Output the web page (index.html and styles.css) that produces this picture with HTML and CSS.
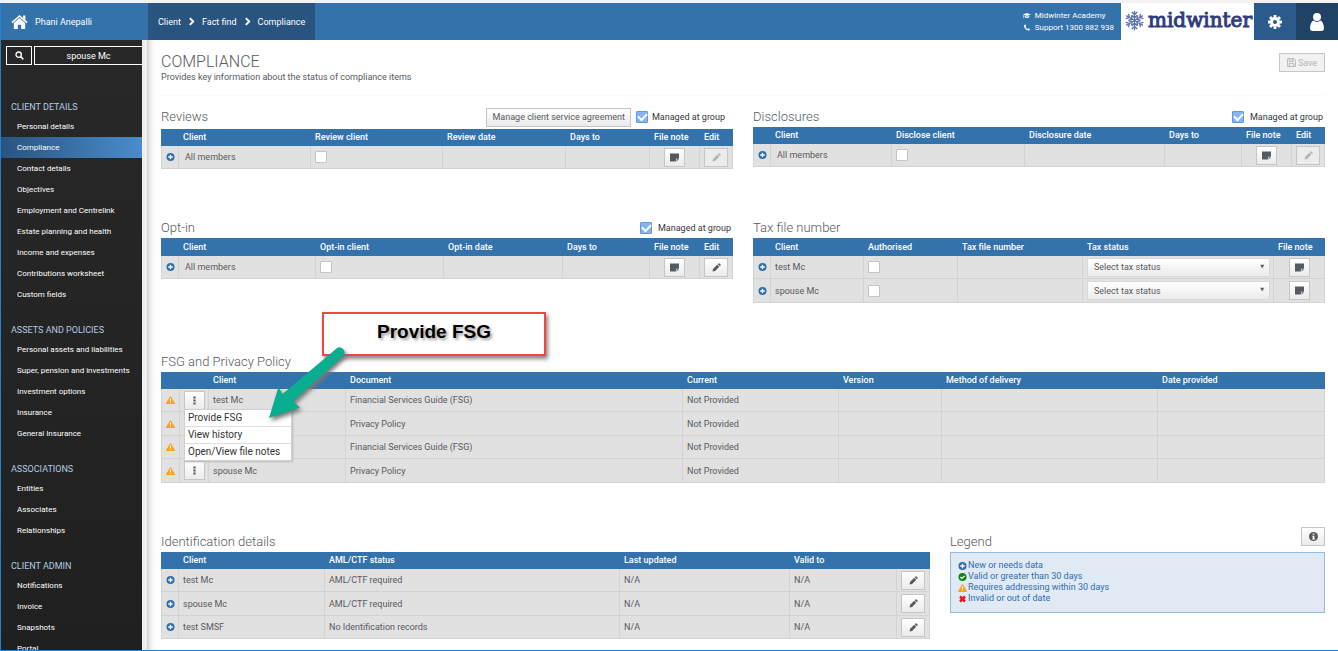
FILE: index.html
```html
<!DOCTYPE html>
<html lang="en">
<head>
<meta charset="utf-8">
<title>Compliance</title>
<link rel="stylesheet" href="styles.css">
</head>
<body>
<svg class="sprite" aria-hidden="true">
  <symbol id="i-plus" viewBox="0 0 16 16"><circle cx="8" cy="8" r="8" fill="#2f6cab"/><path d="M8 3.5v9M3.5 8h9" stroke="#fff" stroke-width="2.6"/></symbol>
  <symbol id="i-ok" viewBox="0 0 16 16"><circle cx="8" cy="8" r="8" fill="#0a8a12"/><path d="M3.8 8l3 3 5.4-5.4" fill="none" stroke="#fff" stroke-width="2.4"/></symbol>
  <symbol id="i-warn" viewBox="0 0 18 16"><path d="M9 0.5a1.2 1.2 0 0 1 1 .6l7.7 13a1.2 1.2 0 0 1-1 1.8H1.300a1.200 1.200 0 0 1-1-1.800l7.700-13a1.200 1.200 0 0 1 1-.6z" fill="#ffa01e"/><path d="M9 5v5M9 11.500v2.200" stroke="#fff" stroke-width="2.200"/></symbol>
  <symbol id="i-cross" viewBox="0 0 16 16"><path d="M3 3l10 10M13 3L3 13" stroke="#f01414" stroke-width="5"/></symbol>
  <symbol id="i-note" viewBox="0 0 16 16"><path d="M0 1h16v9h-5.500v5H0z" fill="currentColor"/><path d="M11.800 11.200H16l-4.200 3.800z" fill="currentColor"/></symbol>
  <symbol id="i-pencil" viewBox="0 0 16 16"><path d="M1 15l.8-4.500 7.400-7.400 3.700 3.700-7.400 7.400zM10.200 2.100l1.400-1.400q.8-.6 1.600 0l2.100 2.100q.6.8 0 1.600l-1.400 1.400z" fill="currentColor"/></symbol>
  <symbol id="i-dots" viewBox="0 0 16 16"><path d="M6 1h4v3.600H6zM6 6.200h4v3.600H6zM6 11.400h4V15H6z" fill="currentColor"/></symbol>
  <symbol id="i-info" viewBox="0 0 16 16"><circle cx="8" cy="8" r="8" fill="currentColor"/><path d="M6.700 2.500h2.800v2.500H6.700zM5.600 6.500h3.900v5h1.200v1.700H5.600v-1.700h1.100V8.200H5.600z" fill="#fff"/></symbol>
  <symbol id="i-home" viewBox="0 0 18 16"><path d="M9 3.800l6 5.200v6.500h-4.200V11H7.200v4.500H3V9z" fill="currentColor"/><path d="M1 8.600L9 1.600l8 7" fill="none" stroke="currentColor" stroke-width="1.700"/><path d="M12.800 1h2.400v5l-2.400-2z" fill="currentColor"/></symbol>
  <symbol id="i-search" viewBox="0 0 16 16"><circle cx="6.500" cy="6.500" r="4.700" fill="none" stroke="currentColor" stroke-width="2.400"/><path d="M10 10l4.800 4.800" stroke="currentColor" stroke-width="2.800"/></symbol>
  <symbol id="i-chev" viewBox="0 0 16 16"><path d="M5 2l6 6-6 6" fill="none" stroke="currentColor" stroke-width="3.400"/></symbol>
  <symbol id="i-cap" viewBox="0 0 18 16"><path d="M9 2l9 3.700-9 3.700-9-3.700zM4 8.800l5 2 5-2v3.400q-5 2.600-10 0zM1.200 6.500h1.200v7H.8z" fill="currentColor"/></symbol>
  <symbol id="i-phone" viewBox="0 0 16 16"><path d="M4 1l2.400 4-1.800 1.800q1.400 3 4.600 4.600L11 9.600l4 2.400q-.6 3-3 3Q2 13.500 1 4 1 1.600 4 1z" fill="currentColor"/></symbol>
  <symbol id="i-gear" viewBox="0 0 16 16"><circle cx="8" cy="8" r="4" fill="none" stroke="currentColor" stroke-width="3.400"/><path d="M8 0v3M8 13v3M0 8h3M13 8h3M2.300 2.300l2.200 2.200M11.500 11.500l2.200 2.200M2.300 13.700l2.200-2.200M11.500 4.500l2.200-2.200" stroke="currentColor" stroke-width="3.200"/></symbol>
  <symbol id="i-user" viewBox="0 0 14 18"><circle cx="7" cy="4" r="4" fill="currentColor"/><path d="M3.500 7.500Q7 10.300 10.500 7.500 13.600 9 14 15.500q-.2 2.500-2.500 2.500h-9Q.2 18 0 15.500.4 9 3.500 7.500z" fill="currentColor"/></symbol>
  <symbol id="i-save" viewBox="0 0 16 16"><path d="M1 1h11l3 3v11H1z" fill="none" stroke="currentColor" stroke-width="1.600"/><path d="M4 1v5h7V1M4 15V9.500h8V15" fill="none" stroke="currentColor" stroke-width="1.600"/><path d="M8 2h2v3H8z" fill="currentColor"/></symbol>
  <symbol id="i-flake" viewBox="0 0 24 24">
    <g id="arm" fill="none" stroke="#5f6fa9" stroke-width="1.500"><path d="M12 12V1M8.800 2.200L12 5.200l3.200-3M8.800 6L12 9l3.200-3"/></g>
    <use href="#arm" transform="rotate(60 12 12)"/><use href="#arm" transform="rotate(120 12 12)"/><use href="#arm" transform="rotate(180 12 12)"/><use href="#arm" transform="rotate(240 12 12)"/><use href="#arm" transform="rotate(300 12 12)"/>
  </symbol>
</svg>

<header class="topbar">
  <a class="owner" href="#"><svg class="home"><use href="#i-home"/></svg>Phani Anepalli</a>
  <nav class="crumbs" aria-label="Breadcrumb">
    <a href="#">Client</a><svg><use href="#i-chev"/></svg><a href="#">Fact find</a><svg><use href="#i-chev"/></svg><a href="#">Compliance</a>
  </nav>
  <div class="contact">
    <a href="#"><svg><use href="#i-cap"/></svg>Midwinter Academy</a>
    <a href="#"><svg><use href="#i-phone"/></svg>Support 1300 882 938</a>
  </div>
  <a class="brand" href="#"><svg><use href="#i-flake"/></svg>midwinter</a>
  <button class="tool" aria-label="Settings"><svg class="gear"><use href="#i-gear"/></svg></button>
  <button class="tool tool-user" aria-label="Account"><svg class="user"><use href="#i-user"/></svg></button>
</header>

<div class="shell">
  <aside class="sidebar">
    <div class="finder">
      <button aria-label="Search"><svg><use href="#i-search"/></svg></button>
      <input type="text" value="spouse Mc" aria-label="Client name">
    </div>
    <nav>
      <h2>CLIENT DETAILS</h2>
      <ul>
        <li><a href="#">Personal details</a></li>
        <li><a class="active" href="#">Compliance</a></li>
        <li><a href="#">Contact details</a></li>
        <li><a href="#">Objectives</a></li>
        <li><a href="#">Employment and Centrelink</a></li>
        <li><a href="#">Estate planning and health</a></li>
        <li><a href="#">Income and expenses</a></li>
        <li><a href="#">Contributions worksheet</a></li>
        <li><a href="#">Custom fields</a></li>
      </ul>
      <h2>ASSETS AND POLICIES</h2>
      <ul>
        <li><a href="#">Personal assets and liabilities</a></li>
        <li><a href="#">Super, pension and investments</a></li>
        <li><a href="#">Investment options</a></li>
        <li><a href="#">Insurance</a></li>
        <li><a href="#">General Insurance</a></li>
      </ul>
      <h2>ASSOCIATIONS</h2>
      <ul>
        <li><a href="#">Entities</a></li>
        <li><a href="#">Associates</a></li>
        <li><a href="#">Relationships</a></li>
      </ul>
      <h2>CLIENT ADMIN</h2>
      <ul>
        <li><a href="#">Notifications</a></li>
        <li><a href="#">Invoice</a></li>
        <li><a href="#">Snapshots</a></li>
        <li><a href="#">Portal</a></li>
      </ul>
    </nav>
  </aside>

  <main class="page">
    <div class="page-head">
      <div>
        <h1>COMPLIANCE</h1>
        <p>Provides key information about the status of compliance items</p>
      </div>
      <button class="btn" disabled><svg><use href="#i-save"/></svg>Save</button>
    </div>

    <div class="sections">
      <div class="pair pair-first">
        <section>
          <div class="head head-deep">
            <h2>Reviews</h2>
            <button class="btn">Manage client service agreement</button>
            <label class="managed"><input type="checkbox" checked>Managed at group</label>
          </div>
          <table class="grid reviews">
            <colgroup><col><col><col><col><col><col><col></colgroup>
            <thead><tr><th></th><th>Client</th><th>Review client</th><th>Review date</th><th>Days to</th><th>File note</th><th>Edit</th></tr></thead>
            <tbody><tr><td class="mark"><svg><use href="#i-plus"/></svg></td><td class="inset">All members</td><td><input type="checkbox" aria-label="Review client"></td><td></td><td></td><td class="mid"><button class="cell-btn" aria-label="File note"><svg><use href="#i-note"/></svg></button></td><td><button class="cell-btn wide" aria-label="Edit" disabled><svg><use href="#i-pencil"/></svg></button></td></tr></tbody>
          </table>
        </section>
        <section>
          <div class="head">
            <h2>Disclosures</h2>
            <label class="managed"><input type="checkbox" checked>Managed at group</label>
          </div>
          <table class="grid disclosures">
            <colgroup><col><col><col><col><col><col><col></colgroup>
            <thead><tr><th></th><th>Client</th><th>Disclose client</th><th>Disclosure date</th><th>Days to</th><th>File note</th><th>Edit</th></tr></thead>
            <tbody><tr><td class="mark"><svg><use href="#i-plus"/></svg></td><td class="inset">All members</td><td><input type="checkbox" aria-label="Disclose client"></td><td></td><td></td><td class="mid"><button class="cell-btn" aria-label="File note"><svg><use href="#i-note"/></svg></button></td><td><button class="cell-btn wide" aria-label="Edit" disabled><svg><use href="#i-pencil"/></svg></button></td></tr></tbody>
          </table>
        </section>
      </div>

      <div class="pair pair-second">
        <section>
          <div class="head">
            <h2>Opt-in</h2>
            <label class="managed"><input type="checkbox" checked>Managed at group</label>
          </div>
          <table class="grid optin">
            <colgroup><col><col><col><col><col><col><col></colgroup>
            <thead><tr><th></th><th>Client</th><th>Opt-in client</th><th>Opt-in date</th><th>Days to</th><th>File note</th><th>Edit</th></tr></thead>
            <tbody><tr><td class="mark"><svg><use href="#i-plus"/></svg></td><td class="inset">All members</td><td><input type="checkbox" aria-label="Opt-in client"></td><td></td><td></td><td class="mid"><button class="cell-btn" aria-label="File note"><svg><use href="#i-note"/></svg></button></td><td><button class="cell-btn wide" aria-label="Edit"><svg><use href="#i-pencil"/></svg></button></td></tr></tbody>
          </table>
        </section>
        <section>
          <div class="head"><h2>Tax file number</h2></div>
          <table class="grid tax">
            <colgroup><col><col><col><col><col><col></colgroup>
            <thead><tr><th></th><th>Client</th><th>Authorised</th><th>Tax file number</th><th>Tax status</th><th>File note</th></tr></thead>
            <tbody>
              <tr><td class="mark"><svg><use href="#i-plus"/></svg></td><td>test Mc</td><td><input type="checkbox" aria-label="Authorised, test Mc"></td><td></td><td><div class="select"><select aria-label="Tax status, test Mc"><option>Select tax status</option></select></div></td><td class="mid"><button class="cell-btn" aria-label="File note"><svg><use href="#i-note"/></svg></button></td></tr>
              <tr><td class="mark"><svg><use href="#i-plus"/></svg></td><td>spouse Mc</td><td><input type="checkbox" aria-label="Authorised, spouse Mc"></td><td></td><td><div class="select"><select aria-label="Tax status, spouse Mc"><option>Select tax status</option></select></div></td><td class="mid"><button class="cell-btn" aria-label="File note"><svg><use href="#i-note"/></svg></button></td></tr>
            </tbody>
          </table>
        </section>
      </div>

      <section class="fsg-section">
        <div class="head"><h2>FSG and Privacy Policy</h2></div>
        <table class="grid fsg">
          <colgroup><col><col><col><col><col><col><col><col></colgroup>
          <thead><tr><th></th><th></th><th>Client</th><th>Document</th><th>Current</th><th>Version</th><th>Method of delivery</th><th>Date provided</th></tr></thead>
          <tbody>
            <tr><td class="mark"><svg><use href="#i-warn"/></svg></td><td class="menu-cell"><button class="cell-btn" aria-label="Actions"><svg><use href="#i-dots"/></svg></button>
              <div class="menu"><button>Provide FSG</button><button>View history</button><button>Open/View file notes</button></div></td><td>test Mc</td><td>Financial Services Guide (FSG)</td><td>Not Provided</td><td></td><td></td><td></td></tr>
            <tr><td class="mark"><svg><use href="#i-warn"/></svg></td><td></td><td></td><td>Privacy Policy</td><td>Not Provided</td><td></td><td></td><td></td></tr>
            <tr><td class="mark"><svg><use href="#i-warn"/></svg></td><td></td><td></td><td>Financial Services Guide (FSG)</td><td>Not Provided</td><td></td><td></td><td></td></tr>
            <tr><td class="mark"><svg><use href="#i-warn"/></svg></td><td><button class="cell-btn" aria-label="Actions"><svg><use href="#i-dots"/></svg></button></td><td>spouse Mc</td><td>Privacy Policy</td><td>Not Provided</td><td></td><td></td><td></td></tr>
          </tbody>
        </table>
        <div class="callout">Provide FSG</div>
        <svg class="arrow" viewBox="0 0 90 84"><path d="M76.500 6.500Q80 4 83 7t.5 6.500L33 59.500l7 6L9 76l9.500-31 4 7z" fill="#08ae8f"/></svg>
      </section>

      <div class="bottom">
        <section>
          <div class="head"><h2>Identification details</h2></div>
          <table class="grid ident">
            <colgroup><col><col><col><col><col><col></colgroup>
            <thead><tr><th></th><th>Client</th><th>AML/CTF status</th><th>Last updated</th><th>Valid to</th><th></th></tr></thead>
            <tbody>
              <tr><td class="mark"><svg><use href="#i-plus"/></svg></td><td>test Mc</td><td>AML/CTF required</td><td>N/A</td><td>N/A</td><td><button class="cell-btn wide" aria-label="Edit"><svg><use href="#i-pencil"/></svg></button></td></tr>
              <tr><td class="mark"><svg><use href="#i-plus"/></svg></td><td>spouse Mc</td><td>AML/CTF required</td><td>N/A</td><td>N/A</td><td><button class="cell-btn wide" aria-label="Edit"><svg><use href="#i-pencil"/></svg></button></td></tr>
              <tr><td class="mark"><svg><use href="#i-plus"/></svg></td><td>test SMSF</td><td>No Identification records</td><td>N/A</td><td>N/A</td><td><button class="cell-btn wide" aria-label="Edit"><svg><use href="#i-pencil"/></svg></button></td></tr>
            </tbody>
          </table>
        </section>
        <section>
          <div class="head head-legend"><h2>Legend</h2><button class="cell-btn wide" aria-label="Information"><svg><use href="#i-info"/></svg></button></div>
          <ul class="legend">
            <li><svg><use href="#i-plus"/></svg>New or needs data</li>
            <li><svg><use href="#i-ok"/></svg>Valid or greater than 30 days</li>
            <li><svg><use href="#i-warn"/></svg>Requires addressing within 30 days</li>
            <li><svg><use href="#i-cross"/></svg>Invalid or out of date</li>
          </ul>
        </section>
      </div>
    </div>
  </main>
</div>
</body>
</html>
```
FILE: styles.css
```css
* { box-sizing: border-box; margin: 0; padding: 0; }

body {
  height: 100vh;
  display: flex;
  flex-direction: column;
  overflow: hidden;
  background: #fff;
  color: #565a60;
  font: 9px/12px Roboto, "Liberation Sans", sans-serif;
  border-top: 3px solid #f3f3f3;
  border-bottom: 1px solid #1b84d6;
}

button, input, select { font: inherit; color: inherit; }
a { color: inherit; text-decoration: none; }
ul { list-style: none; }
svg { display: block; width: 9px; height: 9px; flex: none; }
.sprite { position: absolute; width: 0; height: 0; }

/* Top bar */
.topbar {
  display: flex;
  flex: none;
  height: 37px;
  background: #3472ac;
  color: #fff;
  border-left: 1px solid #1b84d6;
}
.owner { display: flex; align-items: center; gap: 7px; width: 147px; padding-left: 10px; }
.owner .home { width: 17px; height: 16px; }
.crumbs { display: flex; align-items: center; gap: 6px; padding: 0 10px; background: #28547f; }
.contact { margin-left: auto; display: flex; flex-direction: column; justify-content: center; padding-right: 7px; font-size: 8px; }
.contact a { display: flex; align-items: center; gap: 4px; }
.contact svg { width: 8px; height: 7px; }
.brand {
  display: flex;
  align-items: center;
  gap: 3px;
  padding: 0 2px 3px 3px;
  background: #fff;
  color: #2f3c80;
  font: 20px/34px "DejaVu Serif", serif;
  -webkit-text-stroke: 1px #2f3c80;
}
.brand svg { width: 21px; height: 21px; }
.tool { display: grid; place-items: center; width: 42px; border: 0; background: #2b5b8a; color: #fff; }
.tool-user { background: #204266; }
.gear { width: 14px; height: 14px; }
.user { width: 14px; height: 18px; }

.shell { display: flex; flex: 1; min-height: 0; }

/* Sidebar */
.sidebar {
  width: 142px;
  flex: none;
  overflow: hidden;
  padding-top: 6px;
  border-left: 1px solid #1b84d6;
  background: linear-gradient(#282828, #202020);
  color: #fff;
}
.finder { display: flex; gap: 2px; height: 19px; margin: 0 0 32px 5px; }
.finder button { display: grid; place-items: center; width: 26px; border: 1px solid #fff; background: transparent; }
.finder input { flex: 1; min-width: 0; border: 1px solid #fff; border-right: 0; background: transparent; text-align: center; }
.sidebar h2 { padding-left: 10px; font-size: 9px; font-weight: 400; line-height: 18px; color: #b4cbe4; }
.sidebar ul { margin-bottom: 16px; }
.sidebar nav { padding-top: 1px; }
.sidebar li a { display: block; padding-left: 16px; font-size: 8px; line-height: 21px; }
.sidebar .active { background: linear-gradient(90deg, #29547f, #4b8ccb); }

/* Page */
.page {
  flex: 1;
  min-width: 0;
  border-left: 5px solid #efefef;
  padding: 0 13px 0 14px;
  background: linear-gradient(90deg, #d2d2d2, #f6f6f6 5px, #fff 11px);
}
.page-head {
  display: flex;
  justify-content: space-between;
  align-items: flex-start;
  height: 56px;
  padding-top: 13px;
  border-bottom: 1px solid #fafafa;
}
h1 { font-size: 16px; font-weight: 300; line-height: 18px; }

.btn {
  display: flex;
  align-items: center;
  justify-content: center;
  gap: 2px;
  min-width: 46px;
  height: 19px;
  padding: 0 5px;
  border: 1px solid #c6c6c6;
  background: linear-gradient(#fff, #ebebeb);
}
.btn:disabled { background: #f2f2f2; color: #b4b4b4; }

.sections { display: flex; flex-direction: column; gap: 49px; padding-top: 9px; }
.pair { display: grid; grid-template-columns: 1fr 1fr; gap: 20px; align-items: start; }
.bottom { display: grid; grid-template-columns: 769fr 375fr; gap: 20px; align-items: start; }

.head { display: flex; align-items: center; gap: 5px; height: 20px; }
.head h2 { margin-right: auto; font-size: 13px; font-weight: 300; line-height: 20px; }
.pair-first .head { height: 22px; padding-top: 2px; }
.pair-first .head-deep { height: 24px; padding-bottom: 2px; }
.managed { display: flex; align-items: center; gap: 6px; padding-right: 2px; color: #33373d; }
.head-deep .managed { padding-right: 8px; gap: 4px; }

input[type="checkbox"] {
  appearance: none;
  display: block;
  width: 12px;
  height: 12px;
  border: 1px solid #c4c4c4;
  border-radius: 1px;
  background: #fff;
}
input[type="checkbox"]:checked { display: grid; place-items: center; border-color: #5c9ae6; background: #86b5f2; }
input[type="checkbox"]:checked::before {
  content: "";
  width: 7px;
  height: 4px;
  margin-bottom: 2px;
  border: solid #fff;
  border-width: 0 0 2px 2px;
  transform: rotate(-45deg);
}

/* Tables */
.grid { width: 100%; table-layout: fixed; border-collapse: separate; border-spacing: 0; background: #e1e1e1; }
.grid th { height: 17px; padding: 0 0 1px 4px; background: #3472ac; color: #fff; font-weight: 500; text-align: left; white-space: nowrap; }
.pair-second .grid th { height: 18px; }
.grid td { height: 23px; padding: 0 4px; border: solid #d3d3d3; border-width: 0 1px 1px 0; white-space: nowrap; }
.grid tr:nth-child(even) td { height: 24px; }
.grid td:first-child { border-left-width: 1px; }
.grid .mark { padding: 0; }
.mark svg { height: 8px; margin: 0 auto; }
.grid .inset { padding-left: 6px; }
.mid .cell-btn { margin: 0 auto; }

.cell-btn {
  display: grid;
  place-items: center;
  width: 21px;
  height: 19px;
  border: 1px solid #c6c6c6;
  background: linear-gradient(#fff, #ebebeb);
  color: #565a60;
}
.cell-btn.wide { width: 24px; }
.cell-btn:disabled { background: #ececec; color: #b4b4b4; }

.select { position: relative; margin-right: -1px; }
.select select {
  appearance: none;
  display: block;
  width: 100%;
  height: 19px;
  padding: 0 6px;
  border: 1px solid #d6dade;
  background: linear-gradient(#fff, #ebebeb);
}
.select::after { content: "▼"; position: absolute; right: 6px; top: 2px; font: 5px/12px "DejaVu Sans", sans-serif; }

.reviews col:nth-child(1) { width: 18px; }
.reviews col:nth-child(2) { width: 132px; }
.reviews col:nth-child(3) { width: 132px; }
.reviews col:nth-child(4) { width: 123px; }
.reviews col:nth-child(5) { width: 84px; }
.reviews col:nth-child(6) { width: 50px; }
.reviews col:nth-child(7) { width: 33px; }

.disclosures col:nth-child(1) { width: 18px; }
.disclosures col:nth-child(2) { width: 121px; }
.disclosures col:nth-child(3) { width: 133px; }
.disclosures col:nth-child(4) { width: 140px; }
.disclosures col:nth-child(5) { width: 77px; }
.disclosures col:nth-child(6) { width: 50px; }
.disclosures col:nth-child(7) { width: 33px; }

.optin col:nth-child(1) { width: 18px; }
.optin col:nth-child(2) { width: 137px; }
.optin col:nth-child(3) { width: 128px; }
.optin col:nth-child(4) { width: 119px; }
.optin col:nth-child(5) { width: 87px; }
.optin col:nth-child(6) { width: 50px; }
.optin col:nth-child(7) { width: 33px; }

.tax col:nth-child(1) { width: 18px; }
.tax col:nth-child(2) { width: 93px; }
.tax col:nth-child(3) { width: 94px; }
.tax col:nth-child(4) { width: 125px; }
.tax col:nth-child(5) { width: 191px; }
.tax col:nth-child(6) { width: 51px; }

.fsg col:nth-child(1) { width: 19px; }
.fsg col:nth-child(2) { width: 29px; }
.fsg col:nth-child(3) { width: 137px; }
.fsg col:nth-child(4) { width: 337px; }
.fsg col:nth-child(5) { width: 156px; }
.fsg col:nth-child(6) { width: 103px; }
.fsg col:nth-child(7) { width: 216px; }
.fsg col:nth-child(8) { width: 167px; }

.ident col:nth-child(1) { width: 18px; }
.ident col:nth-child(2) { width: 146px; }
.ident col:nth-child(3) { width: 295px; }
.ident col:nth-child(4) { width: 170px; }
.ident col:nth-child(5) { width: 107px; }
.ident col:nth-child(6) { width: 33px; }

/* Actions menu and callout */
.fsg-section, .menu-cell { position: relative; }
.menu {
  position: absolute;
  left: 4px;
  top: 20px;
  z-index: 1;
  width: 108px;
  border: 1px solid #d0d0d0;
  background: #fff;
  box-shadow: 1px 1px 2px #bbb;
}
.menu button { display: block; width: 100%; height: 17px; padding-left: 3px; border: 0; border-bottom: 1px solid #ddd; background: #fff; color: #333; font-size: 10px; line-height: 16px; text-align: left; }
.menu button:last-child { height: 16px; border-bottom: 0; }
.callout {
  position: absolute;
  left: 161px;
  top: -40px;
  width: 224px;
  height: 44px;
  border: 2px solid #f24545;
  background: #fff;
  box-shadow: 2px 3px 4px #888;
  color: #000;
  font: bold 19px/36px "Liberation Sans", sans-serif;
  text-align: center;
  text-shadow: 2px 2px 3px #999;
}
.arrow { position: absolute; left: 99px; top: -10px; z-index: 2; width: 90px; height: 84px; filter: drop-shadow(2px 3px 2px #777); }

/* Legend */
.head-legend { align-items: flex-start; }
.head-legend .cell-btn { margin-top: -5px; }
.legend { height: 61px; padding: 7px; border: 1px solid #94bbe0; background: #e0eaf5; color: #2f6cab; }
.legend li { display: flex; align-items: center; gap: 1px; line-height: 11px; }
.legend svg { height: 8px; }
```
